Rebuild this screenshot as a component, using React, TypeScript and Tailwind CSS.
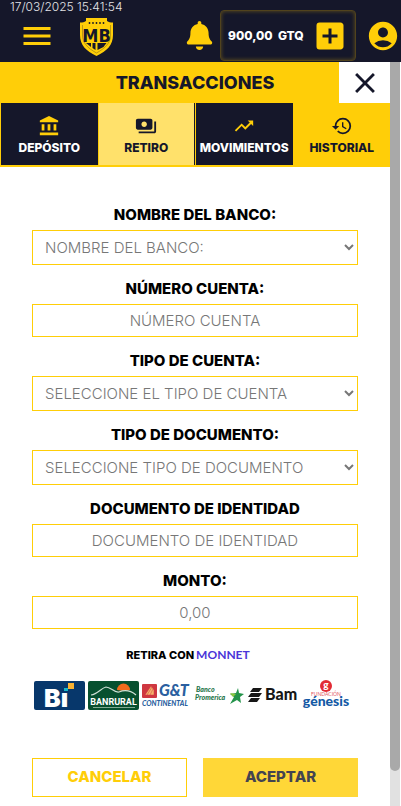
import { useState } from 'react';
import type { IconType } from 'react-icons';
import { FaBell } from 'react-icons/fa';
import {
  MdAccountBalance,
  MdAccountCircle,
  MdAddBox,
  MdClose,
  MdHistory,
  MdMenu,
  MdPayments,
  MdTrendingUp,
} from 'react-icons/md';

interface Tab {
  label: string;
  icon: IconType;
  className: string;
}

interface Field {
  id: string;
  label: string;
  placeholder: string;
  type: 'select' | 'text';
}

const tabs: Tab[] = [
  { label: 'DEPÓSITO', icon: MdAccountBalance, className: 'bg-[#15172a] text-white' },
  { label: 'RETIRO', icon: MdPayments, className: 'border-r border-[#15172a] bg-[#ffe16b] text-[#15172a]' },
  { label: 'MOVIMIENTOS', icon: MdTrendingUp, className: 'bg-[#15172a] text-white' },
  { label: 'HISTORIAL', icon: MdHistory, className: 'bg-[#ffce08] text-[#15172a]' },
];

const fields: Field[] = [
  { id: 'banco', label: 'NOMBRE DEL BANCO:', placeholder: 'NOMBRE DEL BANCO:', type: 'select' },
  { id: 'cuenta', label: 'NÚMERO CUENTA:', placeholder: 'NÚMERO CUENTA', type: 'text' },
  { id: 'tipo-cuenta', label: 'TIPO DE CUENTA:', placeholder: 'SELECCIONE EL TIPO DE CUENTA', type: 'select' },
  { id: 'tipo-documento', label: 'TIPO DE DOCUMENTO:', placeholder: 'SELECCIONE TIPO DE DOCUMENTO', type: 'select' },
  { id: 'documento', label: 'DOCUMENTO DE IDENTIDAD', placeholder: 'DOCUMENTO DE IDENTIDAD', type: 'text' },
  { id: 'monto', label: 'MONTO:', placeholder: '0,00', type: 'text' },
];

function ShieldLogo() {
  return (
    <svg width="33" height="38" viewBox="0 0 33 38">
      <path d="M6 0h21v3c2 1 3 1.500 6 1.500V17c0 10-6 16-16.500 21C6 33 0 27 0 17V4.500c3 0 4-.5 6-1.500z" fill="#ffce08" />
      <path d="M2.500 7v10c0 8 5 13 14 18 9-5 14-10 14-18V7" fill="none" stroke="#8d7617" strokeWidth="0.6" />
      <g fill="#15172a">
        <circle cx="9.500" cy="5" r="0.9" />
        <circle cx="13" cy="5" r="0.9" />
        <circle cx="16.500" cy="5" r="0.9" />
        <circle cx="20" cy="5" r="0.9" />
        <circle cx="23.500" cy="5" r="0.9" />
        {/* lower ornament, follows the shield's point */}
        <path d="M6 25h5v4zM12.500 25h3v7l-3-2zM17.500 25h9l-3 4-6 3z" />
      </g>
      <text
        x="16.500"
        y="24"
        fontFamily="'DejaVu Sans Condensed', 'DejaVu Sans', sans-serif"
        fontSize="18"
        fontWeight="700"
        textAnchor="middle"
        fill="#15172a"
      >
        MB
      </text>
    </svg>
  );
}

function BankLogos() {
  return (
    <svg
      viewBox="0 0 318 32"
      className="w-full overflow-visible"
      fontFamily="Lato, 'Liberation Sans', sans-serif"
      fontWeight="900"
    >
      {/* Banco Industrial */}
      <rect x="0" y="1" width="51" height="29" rx="2" fill="#07376b" />
      <text x="10" y="27" fontFamily="Inter" fontSize="25" fill="#fff">Bı</text>
      <path d="M30 8h4v3h-4z" fill="#17b6c8" />
      <path d="M34 3h6v6h-6z" fill="#f9b233" />

      {/* Banrural */}
      <rect x="54" y="1" width="51" height="29" rx="2" fill="#07502f" />
      <path d="M83 10a6.500 6.500 0 0 1 13 0c-4 1-8 1-13 0z" fill="#f36b1c" />
      <path d="M57 15c7-1 10-7 15-8 5 0 8 6 13 5 5-2 11-2 17 3" fill="none" stroke="#cfe0d5" strokeWidth="1.200" />
      <text x="79.500" y="25" fontSize="9" fontFamily="Roboto, sans-serif" fontWeight="700" textAnchor="middle" fill="#fff">
        BANRURAL
      </text>
      <path d="M59 27.500h42" stroke="#9fc0ac" strokeWidth="0.800" />

      {/* G&T Continental */}
      <rect x="108" y="4" width="15" height="14" rx="1" fill="#cf3740" />
      <path d="M111 15l6-9 3 4v5zM113 15l5-8M116 15l3-6" fill="#f6b56b" stroke="#cf3740" strokeWidth="0.500" />
      <text x="125" y="16" fontSize="16" fontStyle="italic" fill="#2a5fa0">G&amp;T</text>
      <text x="108" y="26" fontSize="7" fontStyle="italic" fill="#2a5fa0">CONTINENTAL</text>

      {/* Banco Promerica */}
      <g fontSize="7" fontStyle="italic" fill="#27764a">
        <text x="162" y="12">Banco</text>
        <text x="161" y="20">Promerica</text>
      </g>
      <path d="M204 8l1 5 5 1-4 3 1 6-4-3-7 4 4-7-4-3 6-1z" fill="#23934a" />
      <path d="M196 13l6 1-3 3z" fill="#8cc63f" />

      {/* Bam */}
      <path
        d="M219 8h9l-3 4h-9zM217 13h11l-3 4h-11zM217 18h9l-3 4h-9z"
        fill="#161616"
      />
      <text x="231" y="20" fontSize="16" fill="#161616">Bam</text>

      {/* Fundación Génesis */}
      <circle cx="292" cy="6" r="6" fill="#e22b35" />
      <text x="292" y="8" fontSize="10" textAnchor="middle" fill="#fff">g</text>
      <text textAnchor="middle">
        <tspan x="292" y="16" fontSize="5" fontWeight="400" fill="#df5660">FUNDACIÓN</tspan>
        <tspan x="292" y="26" fontSize="14" fill="#1459a5">génesis</tspan>
      </text>
    </svg>
  );
}

function Header() {
  return (
    <header className="relative flex h-[62px] items-end bg-[#15172a] pb-px text-[#ffce08]">
      <time className="absolute top-0 left-2.5 text-xs leading-[14px] font-light text-[#e4e4e8]">17/03/2025 15:41:54</time>
      <div className="flex h-[51px] w-full items-center">
        <button type="button" aria-label="Menú" className="ml-[19px]">
          <MdMenu size={36} />
        </button>
        <a href="#inicio" className="ml-[25px] pt-0.5" aria-label="Inicio">
          <ShieldLogo />
        </a>
        <button type="button" aria-label="Notificaciones" className="ml-auto">
          <FaBell size={29} />
        </button>
        <div className="ml-1.5 flex h-[51px] w-[136px] items-center justify-between rounded border border-[#51431d] px-[7px] shadow-[inset_0_0_4px_#66531c]">
          <span className="text-xs font-extrabold whitespace-pre text-white">900,00  GTQ</span>
          <button type="button" aria-label="Agregar saldo">
            <MdAddBox size={36} />
          </button>
        </div>
        <button type="button" aria-label="Perfil" className="ml-2.5 pr-px">
          <MdAccountCircle size={34} />
        </button>
      </div>
    </header>
  );
}

function FormField({ id, label, placeholder, type }: Field) {
  const [value, setValue] = useState('');

  return (
    <div className="flex flex-col gap-[3px]">
      <label htmlFor={id} className="text-center text-[15px] leading-6 font-extrabold text-black">
        {label}
      </label>
      {type === 'select' ? (
        <select
          id={id}
          value={value}
          onChange={(e) => setValue(e.target.value)}
          className="h-[35px] w-full border border-[#ffce08] bg-white pr-1 pl-2 text-[15px] font-light text-[#777]"
        >
          <option value="">{placeholder}</option>
        </select>
      ) : (
        <input
          id={id}
          value={value}
          placeholder={placeholder}
          onChange={(e) => setValue(e.target.value)}
          className="h-[33px] w-full border border-[#ffce08] bg-white px-3 text-center text-[15px] font-light text-[#777] placeholder:text-[#777]"
        />
      )}
    </div>
  );
}

export default function App() {
  return (
    <div className="flex min-h-screen flex-col bg-white font-[Inter,'Liberation_Sans',sans-serif]">
      <Header />
      <div className="flex flex-1 pr-px">
        <main className="min-w-0 flex-1">
          <div className="flex h-[41px] items-center bg-[#ffce08]">
            <h1 className="flex-1 pl-[51px] text-center text-lg font-extrabold text-[#15172a]">TRANSACCIONES</h1>
            <button
              type="button"
              aria-label="Cerrar"
              className="flex h-full w-[51px] items-center justify-center bg-white text-[#15172a]"
            >
              <MdClose size={34} />
            </button>
          </div>

          <nav className="grid h-16 grid-cols-4 gap-px bg-[#ffce08] pb-0.5 pl-px">
            {tabs.map(({ label, icon: Icon, className }) => (
              <button
                key={label}
                type="button"
                className={`flex min-w-0 flex-col items-center justify-center gap-px pt-1 text-xs leading-5 font-extrabold ${className}`}
              >
                <Icon size={22} className={className.includes('text-white') ? 'text-[#ffce08]' : ''} />
                {label}
              </button>
            ))}
          </nav>

          <form className="px-8 pt-9 pb-[9px]" onSubmit={(e) => e.preventDefault()}>
            <div className="flex flex-col gap-3">
              {fields.map((field) => (
                <FormField key={field.id} {...field} />
              ))}
            </div>

            <p className="mt-4 flex h-5 items-center justify-center gap-0.5 pr-3.5 text-[11px] font-extrabold text-black">
              RETIRA CON
              <span className="font-[Lato,sans-serif] text-xs font-bold text-[#4a35d8]">MONNET</span>
            </p>
            <div className="mt-[15px] pr-1.5 pl-0.5">
              <BankLogos />
            </div>

            <div className="mt-[46px] grid grid-cols-2 gap-4">
              <button type="button" className="h-[39px] border border-[#ffce08] text-[15px] font-extrabold text-[#ffce08]">
                CANCELAR
              </button>
              <button type="submit" className="h-[39px] bg-[#ffd737] text-[15px] font-extrabold text-[#444450]">
                ACEPTAR
              </button>
            </div>
          </form>
        </main>

        <div className="flex w-2.5 flex-col bg-[#e1e1e1] pb-[35px]" aria-hidden="true">
          <div className="flex-1 rounded-b-full bg-[#a9a9a9]" />
        </div>
      </div>
    </div>
  );
}
